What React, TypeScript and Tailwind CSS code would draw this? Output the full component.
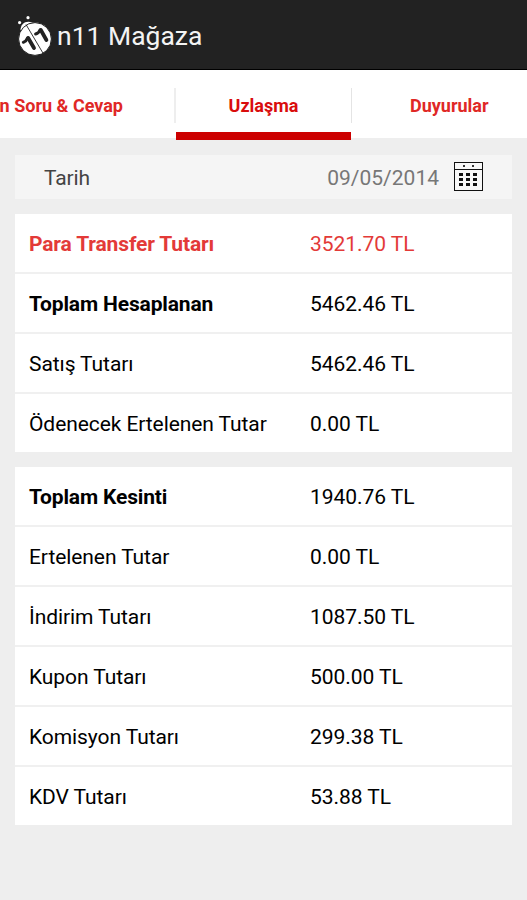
import clsx from "clsx";

type Row = {
  label: string;
  value: string;
  bold?: boolean;
  red?: boolean;
};

const transferRows: Row[] = [
  { label: "Para Transfer Tutarı", value: "3521.70 TL", bold: true, red: true },
  { label: "Toplam Hesaplanan", value: "5462.46 TL", bold: true },
  { label: "Satış Tutarı", value: "5462.46 TL" },
  { label: "Ödenecek Ertelenen Tutar", value: "0.00 TL" },
];

const deductionRows: Row[] = [
  { label: "Toplam Kesinti", value: "1940.76 TL", bold: true },
  { label: "Ertelenen Tutar", value: "0.00 TL" },
  { label: "İndirim Tutarı", value: "1087.50 TL" },
  { label: "Kupon Tutarı", value: "500.00 TL" },
  { label: "Komisyon Tutarı", value: "299.38 TL" },
  { label: "KDV Tutarı", value: "53.88 TL" },
];

function Logo() {
  return (
    <svg width="34" height="40" viewBox="0 0 34 40" fill="none">
      <circle cx="1.6" cy="6.6" r="1.6" fill="#fff" />
      <circle cx="10" cy="1.7" r="1.6" fill="#fff" />
      <path d="M2.5 14C2.5 8 8 4 14 6.5L17 9L5 16Z" fill="#fff" />
      <circle cx="17" cy="23" r="16.4" fill="#fff" stroke="#222" strokeWidth="1" />
      <path d="M8 8.5L25.5 38" stroke="#222" strokeWidth="0.9" />
      <g stroke="#222" strokeLinejoin="round" strokeLinecap="round">
        <path d="M5.3 26.3Q8.5 25 9.5 22" strokeWidth="3" />
        <path d="M10.2 22L16 32" strokeWidth="3.8" />
        <path d="M17.6 18Q21 17 22 14" strokeWidth="3" />
        <path d="M22.8 14L28.4 24" strokeWidth="3.8" />
      </g>
    </svg>
  );
}

function CalendarIcon() {
  return (
    <svg width="29" height="30" viewBox="0 0 29 30" shapeRendering="crispEdges">
      <rect x="0.5" y="0.5" width="28" height="28" fill="#f8f8f8" stroke="#111" strokeWidth="1" />
      <path d="M0 7.5H29" stroke="#111" strokeWidth="1" />
      <path d="M9 3h2v2H9zM18 3h2v2h-2z" fill="#333" />
      {[11, 16, 21].map((y) =>
        [5, 12, 19].map((x) => (
          <rect key={`${x}-${y}`} x={x} y={y} width="4" height="3" fill="#111" />
        ))
      )}
    </svg>
  );
}

function Card({ rows }: { rows: Row[] }) {
  return (
    <div className="divide-y-2 divide-[#f0f0f0] bg-white">
      {rows.map((row, i) => (
        <div
          key={row.label}
          className={clsx(
            "flex items-center pt-[3px] pl-[14px] text-[21px]",
            i === rows.length - 1 ? "h-[58px]" : "h-[60px]",
            row.red ? "text-[#e33a38]" : "text-black"
          )}
        >
          <div
            className={clsx(
              "w-[281px] whitespace-nowrap",
              row.bold ? "font-bold tracking-[-0.15px]" : "tracking-[-0.08px]"
            )}
          >
            {row.label}
          </div>
          <div className="tracking-[-0.05px] whitespace-nowrap">{row.value}</div>
        </div>
      ))}
    </div>
  );
}

export default function App() {
  return (
    <div className="flex h-[900px] w-[527px] flex-col overflow-hidden bg-[#eee] font-['Roboto',sans-serif]">
      <header className="flex h-[70px] shrink-0 items-center border-b border-black bg-[#222] pt-[2px] pl-[18px]">
        <Logo />
        <h1 className="ml-[5px] text-[26.5px] text-[#f3f3f3]">n11 Mağaza</h1>
      </header>

      <nav className="flex h-[68px] shrink-0 bg-white text-[18px] font-bold text-[#e02826]">
        <div className="flex w-[174px] shrink-0 justify-end pt-[22px] pr-[51px] whitespace-nowrap">
          n Soru &amp; Cevap
        </div>
        <div className="mt-[18px] h-[35px] w-[2px] bg-[#eee]" />
        <div className="flex h-[70px] w-[175px] justify-center border-b-8 border-[#c00] pt-[22px] text-[#d90d0d]">
          Uzlaşma
        </div>
        <div className="mt-[18px] h-[35px] w-px bg-[#e4e4e4]" />
        <div className="pt-[22px] pl-[58px]">Duyurular</div>
      </nav>

      <main className="flex flex-col gap-[15px] pt-[17px] pr-[15px] pl-[15px]">
        <div className="flex h-[44px] items-center bg-[#f5f5f5] pr-[29px] pl-[29px] text-[21px]">
          <div className="pt-[4px] tracking-[-0.1px] text-[#444]">Tarih</div>
          <div className="ml-auto pt-[4px] text-[#777]">09/05/2014</div>
          <div className="ml-[15px]">
            <CalendarIcon />
          </div>
        </div>
        <Card rows={transferRows} />
        <Card rows={deductionRows} />
      </main>
    </div>
  );
}
